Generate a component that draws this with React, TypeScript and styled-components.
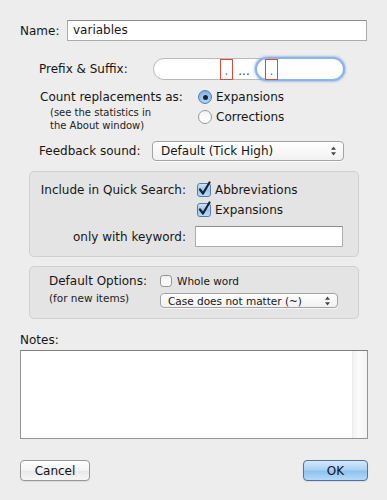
import { createGlobalStyle, styled } from "styled-components";

const GlobalStyle = createGlobalStyle`
  * {
    box-sizing: border-box;
  }

  body {
    margin: 0;
    background: #ededed;
    font-family: "DejaVu Sans", "Liberation Sans", sans-serif;
    font-size: 12px;
    color: #161616;
  }
`;

const Sheet = styled.div`
  width: 387px;
  height: 500px;
  padding: 20px 19px 0 20px;
  display: flex;
  flex-direction: column;
`;

const Row = styled.div<{ $indent?: number; $top?: number; $align?: string }>`
  display: flex;
  align-items: ${(p) => p.$align ?? "center"};
  padding-left: ${(p) => p.$indent ?? 0}px;
  margin-top: ${(p) => p.$top ?? 0}px;
`;

const Label = styled.div<{ $width: number; $right?: boolean }>`
  width: ${(p) => p.$width}px;
  flex-shrink: 0;
  white-space: nowrap;
  text-align: ${(p) => (p.$right ? "right" : "left")};
  padding-right: ${(p) => (p.$right ? 9 : 0)}px;
`;

const TextField = styled.div<{ $width: number }>`
  width: ${(p) => p.$width}px;
  height: 21px;
  background: #fff;
  border: 1px solid #acacac;
  border-top-color: #8c8c8c;
  padding-left: 5px;
  line-height: 19px;
`;

/* prefix / suffix pill fields */
const PillGroup = styled.div`
  width: 192px;
  height: 22px;
  display: flex;
  align-items: center;
  background: #fff;
  border: 1px solid #b9b9b9;
  border-radius: 11px;
`;

const PillLeft = styled.div`
  width: 79px;
  height: 100%;
  display: flex;
  justify-content: flex-end;
  align-items: center;
`;

const Ellipsis = styled.div`
  width: 22px;
  text-align: center;
  line-height: 14px;
  padding-top: 3px;
  color: #333;
`;

const FocusPill = styled.div`
  flex: 1;
  height: 24px;
  margin: -1px -1px -1px 0;
  border: 2px solid #8db4e6;
  border-radius: 12px;
  box-shadow: 0 0 2px 1px rgba(110, 160, 225, 0.55);
  background: #fff;
  display: flex;
  align-items: center;
  padding-left: 8px;
`;

const Marker = styled.div`
  width: 13px;
  height: 21px;
  border: 1px solid #e0473d;
  display: flex;
  justify-content: center;
  align-items: flex-end;
  color: #3b74b4;
  font-size: 12px;
  line-height: 15px;
`;

/* count replacements */
const LabelColumn = styled.div<{ $width: number }>`
  width: ${(p) => p.$width}px;
  flex-shrink: 0;
  display: flex;
  flex-direction: column;
`;

const MainLine = styled.div<{ $height: number }>`
  line-height: ${(p) => p.$height}px;
  white-space: nowrap;
`;

const NoteLine = styled.div<{ $indent?: number; $size?: number; $height?: number }>`
  padding-left: ${(p) => p.$indent ?? 0}px;
  font-size: ${(p) => p.$size ?? 10}px;
  line-height: ${(p) => p.$height ?? 13}px;
  white-space: nowrap;
  color: #222;
`;

const ChoiceColumn = styled.div`
  display: flex;
  flex-direction: column;
`;

const Choice = styled.div<{ $height?: number; $gap?: number; $size?: number }>`
  display: flex;
  align-items: center;
  height: ${(p) => p.$height ?? 20}px;
  gap: ${(p) => p.$gap ?? 4}px;
  font-size: ${(p) => p.$size ?? 12}px;
  white-space: nowrap;
`;

const Radio = styled.div<{ $on?: boolean }>`
  width: 14px;
  height: 14px;
  border-radius: 50%;
  border: 1px solid ${(p) => (p.$on ? "#5a7fab" : "#979797")};
  background: ${(p) =>
    p.$on
      ? "radial-gradient(circle at 50% 70%, #b9dbfa 0%, #8dbcec 60%, #6a9fd8 100%)"
      : "linear-gradient(#f4f4f4, #ffffff)"};
  display: flex;
  justify-content: center;
  align-items: center;

  &::after {
    content: "";
    display: ${(p) => (p.$on ? "block" : "none")};
    width: 5px;
    height: 5px;
    border-radius: 50%;
    background: #1c2330;
  }
`;

const Box = styled.div<{ $small?: boolean }>`
  position: relative;
  width: ${(p) => (p.$small ? 12 : 14)}px;
  height: ${(p) => (p.$small ? 12 : 14)}px;
  border-radius: 3px;
  flex-shrink: 0;
`;

const CheckBox = ({ checked, small }: { checked?: boolean; small?: boolean }) => (
  <Box $small={small}>
    <svg width={small ? 12 : 16} height={small ? 12 : 16} viewBox="0 0 16 16" style={{ position: "absolute", left: 0, top: small ? 0 : -2 }}>
      <defs>
        <linearGradient id="cbOn" x1="0" y1="0" x2="0" y2="1">
          <stop offset="0" stopColor="#d3e6fa" />
          <stop offset="0.5" stopColor="#9cc6ef" />
          <stop offset="1" stopColor="#bcdcfa" />
        </linearGradient>
        <linearGradient id="cbOff" x1="0" y1="0" x2="0" y2="1">
          <stop offset="0" stopColor="#f2f2f2" />
          <stop offset="1" stopColor="#ffffff" />
        </linearGradient>
      </defs>
      {checked ? (
        <>
          <rect x="0.5" y="2.5" width="13" height="13" rx="2.5" fill="url(#cbOn)" stroke="#587ca6" />
          <path d="M3 8.5 L6 12.5 L12.5 1.5" fill="none" stroke="#1b2430" strokeWidth="2.2" strokeLinecap="round" strokeLinejoin="round" />
        </>
      ) : (
        <rect x="0.7" y="0.7" width="14.6" height="14.6" rx="3.5" fill="url(#cbOff)" stroke="#8f8f8f" strokeWidth="1.3" />
      )}
    </svg>
  </Box>
);

/* pop up buttons */
const Popup = styled.div<{ $width: number; $height: number; $size?: number }>`
  width: ${(p) => p.$width}px;
  height: ${(p) => p.$height}px;
  border: 1px solid #a3a3a3;
  border-radius: 4px;
  background: linear-gradient(#ffffff, #f1f1f1);
  display: flex;
  align-items: center;
  justify-content: space-between;
  padding: 0 6px 0 ${(p) => (p.$size ? 7 : 8)}px;
  font-size: ${(p) => p.$size ?? 12}px;
  white-space: nowrap;
  box-shadow: 0 1px 0 rgba(255, 255, 255, 0.7);
`;

const Arrows = () => (
  <svg width="7" height="10" viewBox="0 0 7 10">
    <path d="M3.5 0.5 L6 3.8 L1 3.8 Z" fill="#444" />
    <path d="M3.5 9.5 L6 6.2 L1 6.2 Z" fill="#444" />
  </svg>
);

/* group boxes */
const GroupBox = styled.div<{ $top: number; $height: number }>`
  margin: ${(p) => p.$top}px 0 0 9px;
  width: 330px;
  height: ${(p) => p.$height}px;
  background: #e4e4e4;
  border: 1px solid #d0d0d0;
  border-radius: 5px;
  display: flex;
  flex-direction: column;
`;

/* notes */
const NotesLabel = styled.div`
  margin-top: 14px;
  line-height: 14px;
`;

const NotesArea = styled.div`
  margin-top: 3px;
  height: 89px;
  background: #fff;
  border: 1px solid #939393;
  border-top-color: #7e7e7e;
  display: flex;
  justify-content: flex-end;
`;

const ScrollTrack = styled.div`
  width: 15px;
  border-left: 1px solid #ececec;
  background: linear-gradient(90deg, #f2f2f2, #fbfbfb 40%, #f3f3f3);
`;

/* bottom buttons */
const ButtonRow = styled.div`
  margin-top: 21px;
  display: flex;
  justify-content: space-between;
`;

const Button = styled.div<{ $width: number; $primary?: boolean }>`
  width: ${(p) => p.$width}px;
  height: 21px;
  border-radius: 4px;
  border: 1px solid ${(p) => (p.$primary ? "#51729e" : "#979797")};
  background: ${(p) =>
    p.$primary
      ? "linear-gradient(#d4e8fb 0%, #a9d0f4 48%, #8dc1ef 52%, #b4daf9 100%)"
      : "linear-gradient(#ffffff 0%, #f3f3f3 50%, #e9e9e9 52%, #f6f6f6 100%)"};
  box-shadow: 0 1px 1px rgba(0, 0, 0, 0.08);
  display: flex;
  justify-content: center;
  align-items: center;
  font-size: 12px;
  color: #111;
`;

export default function App() {
  return (
    <>
      <GlobalStyle />
      <Sheet>
        <Row>
          <Label $width={47}>Name:</Label>
          <TextField $width={300}>variables</TextField>
        </Row>

        <Row $indent={19} $top={17}>
          <Label $width={114}>Prefix &amp; Suffix:</Label>
          <PillGroup>
            <PillLeft>
              <Marker>.</Marker>
            </PillLeft>
            <Ellipsis>...</Ellipsis>
            <FocusPill>
              <Marker>.</Marker>
            </FocusPill>
          </PillGroup>
        </Row>

        <Row $indent={20} $top={7} $align="flex-start">
          <LabelColumn $width={158}>
            <MainLine $height={18} style={{ marginTop: 1 }}>
              Count replacements as:
            </MainLine>
            <NoteLine $indent={10}>(see the statistics in</NoteLine>
            <NoteLine $indent={10}>the About window)</NoteLine>
          </LabelColumn>
          <ChoiceColumn>
            <Choice>
              <Radio $on />
              Expansions
            </Choice>
            <Choice>
              <Radio />
              Corrections
            </Choice>
          </ChoiceColumn>
        </Row>

        <Row $indent={19} $top={9}>
          <Label $width={113}>Feedback sound:</Label>
          <Popup $width={192} $height={20}>
            Default (Tick High)
            <Arrows />
          </Popup>
        </Row>

        <GroupBox $top={10} $height={86}>
          <Row $indent={6} $top={8} $align="flex-start">
            <Label $width={159} $right style={{ lineHeight: "20px" }}>
              Include in Quick Search:
            </Label>
            <ChoiceColumn style={{ marginLeft: 2 }}>
              <Choice>
                <CheckBox checked />
                Abbreviations
              </Choice>
              <Choice>
                <CheckBox checked />
                Expansions
              </Choice>
            </ChoiceColumn>
          </Row>
          <Row $indent={6} $top={6}>
            <Label $width={159} $right>
              only with keyword:
            </Label>
            <TextField $width={148} />
          </Row>
        </GroupBox>

        <GroupBox $top={9} $height={53}>
          <Row $indent={19} $top={6} $align="flex-start">
            <LabelColumn $width={111}>
              <MainLine $height={16}>Default Options:</MainLine>
              <NoteLine $size={10.5} $height={14} style={{ marginTop: 2 }}>
                (for new items)
              </NoteLine>
            </LabelColumn>
            <ChoiceColumn>
              <Choice $height={16} $gap={5} $size={10.5}>
                <CheckBox small />
                Whole word
              </Choice>
              <Popup $width={178} $height={15} $size={10.5} style={{ marginTop: 4 }}>
                Case does not matter (~)
                <Arrows />
              </Popup>
            </ChoiceColumn>
          </Row>
        </GroupBox>

        <NotesLabel>Notes:</NotesLabel>
        <NotesArea>
          <ScrollTrack />
        </NotesArea>

        <ButtonRow>
          <Button $width={70}>Cancel</Button>
          <Button $width={65} $primary>
            OK
          </Button>
        </ButtonRow>
      </Sheet>
    </>
  );
}
